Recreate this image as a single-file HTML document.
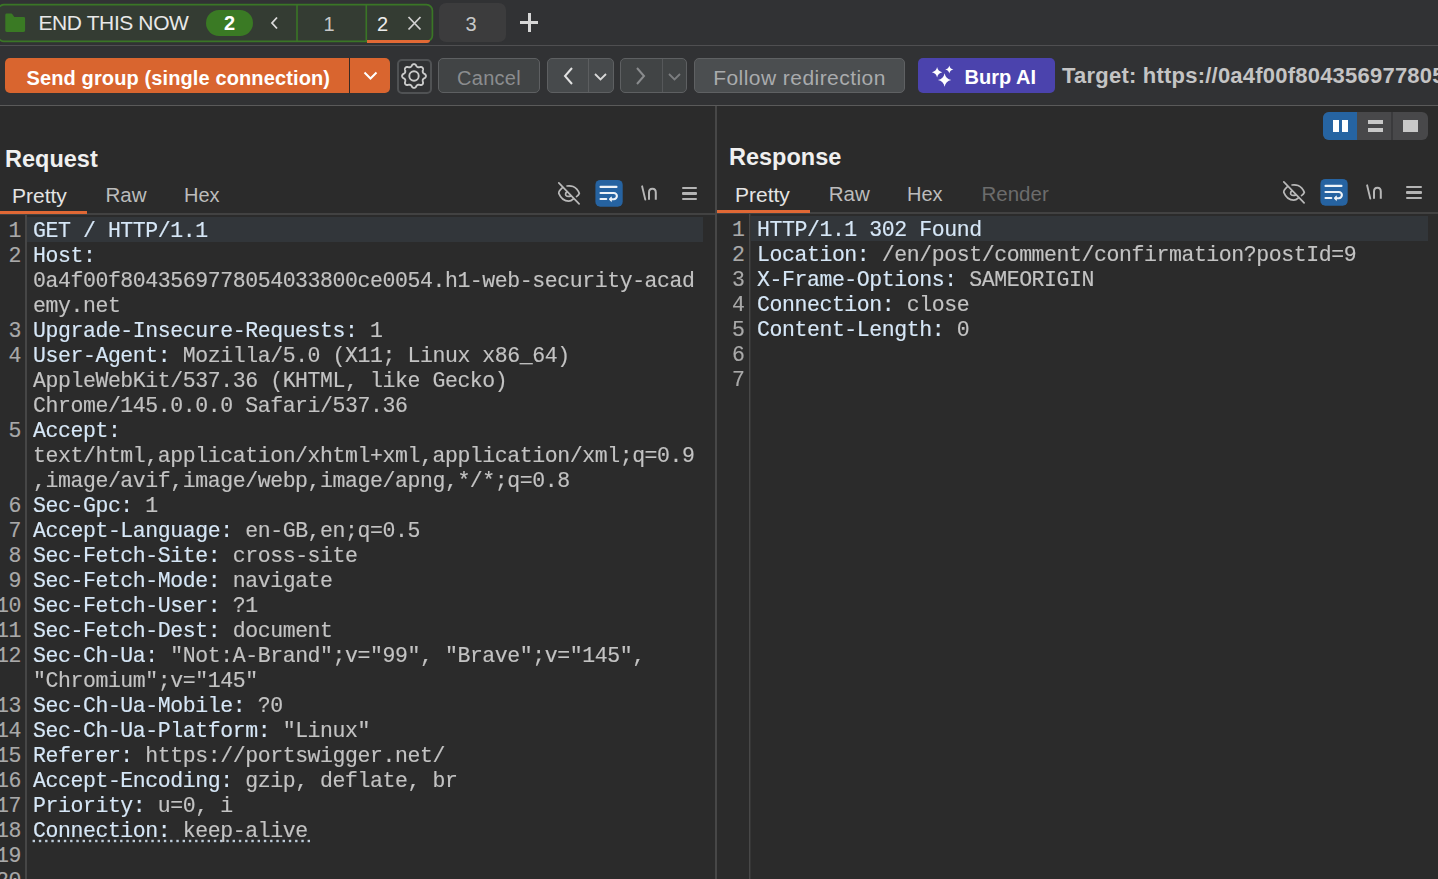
<!DOCTYPE html>
<html><head><meta charset="utf-8">
<style>
*{margin:0;padding:0;box-sizing:border-box}
html,body{width:1438px;height:879px;overflow:hidden;background:#2b2b2b;font-family:"Liberation Sans",sans-serif}
.a{position:absolute}
#top{left:0;top:0;width:1438px;height:106px;background:#313234}
#sep1{left:0;top:45px;width:1438px;height:1px;background:#4f4f51}
#sep2{left:0;top:105px;width:1438px;height:1px;background:#5a5a5a}
.txt{white-space:pre;line-height:1}
.mono{font-family:"Liberation Mono",monospace;font-size:21.5px;letter-spacing:-0.42px;white-space:pre;line-height:25px;-webkit-text-stroke:0.15px currentColor}
.code{will-change:transform}
.k{color:#d6e7f7}
.v{color:#c3c3c3}
.ln{color:#a9a9a9;text-align:right;width:40px}
</style></head><body>
<div id="top" class="a"></div>
<div id="sep1" class="a"></div>
<div id="sep2" class="a"></div>

<!-- tab group -->
<svg class="a" style="left:0;top:0" width="440" height="46"><rect x="-2" y="4.6" width="434.4" height="36.8" rx="6" fill="#343c33" stroke="#3a7626" stroke-width="1.7"/></svg>
<svg class="a" style="left:0;top:0" width="32" height="40"><path fill="#3a7a24" d="M5.3 14.9 Q5.3 13.5 6.7 13.5 H11.4 Q11.9 13.5 12.2 13.9 L14.3 17.1 H23.7 Q25.1 17.1 25.1 18.5 V30.5 Q25.1 31.9 23.7 31.9 H6.7 Q5.3 31.9 5.3 30.5 Z"/></svg>
<div class="a txt" style="left:38.5px;top:12px;font-size:21px;color:#e8e8e8;letter-spacing:-0.4px">END THIS NOW</div>
<div class="a" style="left:206px;top:10px;width:47px;height:26px;background:#3a7a24;border-radius:13px"></div>
<div class="a txt" style="left:206px;top:13px;width:47px;text-align:center;font-size:20px;font-weight:bold;color:#fff">2</div>
<svg class="a" style="left:268px;top:14px" width="14" height="18"><path d="M9 3.5 L4 9 L9 14.5" stroke="#dcdcdc" stroke-width="1.8" fill="none"/></svg>
<svg class="a" style="left:290px;top:0" width="90" height="46"><path d="M7 5 V41 M76.3 5 V41" stroke="#3a7626" stroke-width="1.6"/></svg>

<div class="a txt" style="left:295.5px;top:14px;width:67px;text-align:center;font-size:20px;color:#c8c8c8">1</div>
<div class="a txt" style="left:377px;top:14px;font-size:20px;color:#ececec">2</div>
<svg class="a" style="left:405px;top:14px" width="18" height="18"><path d="M3.5 3 L15.5 15.5 M15.5 3 L3.5 15.5" stroke="#d0d0d0" stroke-width="1.8" fill="none"/></svg>
<div class="a" style="left:367px;top:39.5px;width:63px;height:3px;background:#e26935;border-radius:0 0 3px 0"></div>
<div class="a" style="left:439px;top:3px;width:67px;height:39px;background:#3c3c3d;border-radius:7px"></div>
<div class="a txt" style="left:437.5px;top:13.5px;width:67px;text-align:center;font-size:20px;color:#c8c8c8">3</div>
<div class="a" style="left:520px;top:21px;width:18px;height:2.5px;background:#d6d6d6"></div>
<div class="a" style="left:528px;top:13px;width:2.5px;height:18.5px;background:#d6d6d6"></div>

<!-- toolbar -->
<div class="a btn" style="left:5px;top:58px;width:385px;height:35px;background:#d9652f;border-radius:5px"></div>
<div class="a" style="left:349px;top:58px;width:1px;height:35px;background:#3a2a22"></div>
<div class="a txt" style="left:26.5px;top:68px;font-size:20px;font-weight:bold;color:#fff;letter-spacing:0.12px">Send group (single connection)</div>
<svg class="a" style="left:362px;top:69px" width="18" height="14"><path d="M2.5 3.5 L8.5 9.5 L14.5 3.5" stroke="#fff" stroke-width="2" fill="none"/></svg>
<div class="a" style="left:397px;top:58.5px;width:34.5px;height:35px;border:2px solid #505254;border-radius:5px"></div>
<svg class="a" style="left:396px;top:56px" width="38" height="40" viewBox="0 0 38 40"><path fill="none" stroke="#cacaca" stroke-width="1.9" stroke-linejoin="round" d="M29.90 20.00 L29.89 20.23 L29.85 20.47 L29.78 20.69 L29.68 20.92 L29.57 21.14 L29.42 21.35 L29.25 21.56 L29.06 21.75 L28.84 21.94 L28.54 22.10 L28.25 22.25 L28.02 22.40 L27.81 22.56 L27.62 22.71 L27.45 22.87 L27.30 23.02 L27.17 23.18 L27.05 23.34 L26.95 23.50 L26.87 23.67 L26.81 23.85 L26.76 24.04 L26.73 24.23 L26.71 24.44 L26.71 24.66 L26.72 24.89 L26.75 25.13 L26.78 25.38 L26.83 25.66 L26.94 25.97 L27.03 26.30 L27.06 26.58 L27.06 26.86 L27.03 27.12 L26.98 27.37 L26.91 27.61 L26.82 27.84 L26.71 28.05 L26.57 28.24 L26.41 28.41 L26.24 28.57 L26.05 28.71 L25.84 28.82 L25.61 28.91 L25.37 28.98 L25.12 29.03 L24.86 29.06 L24.58 29.06 L24.30 29.03 L23.97 28.94 L23.66 28.83 L23.38 28.78 L23.13 28.75 L22.89 28.72 L22.66 28.71 L22.44 28.71 L22.23 28.73 L22.04 28.76 L21.85 28.81 L21.67 28.87 L21.50 28.95 L21.34 29.05 L21.18 29.17 L21.02 29.30 L20.87 29.45 L20.71 29.62 L20.56 29.81 L20.40 30.02 L20.25 30.25 L20.10 30.54 L19.94 30.84 L19.75 31.06 L19.56 31.25 L19.35 31.42 L19.14 31.57 L18.92 31.68 L18.69 31.78 L18.47 31.85 L18.23 31.89 L18.00 31.90 L17.77 31.89 L17.53 31.85 L17.31 31.78 L17.08 31.68 L16.86 31.57 L16.65 31.42 L16.44 31.25 L16.25 31.06 L16.06 30.84 L15.90 30.54 L15.75 30.25 L15.60 30.02 L15.44 29.81 L15.29 29.62 L15.13 29.45 L14.98 29.30 L14.82 29.17 L14.66 29.05 L14.50 28.95 L14.33 28.87 L14.15 28.81 L13.96 28.76 L13.77 28.73 L13.56 28.71 L13.34 28.71 L13.11 28.72 L12.87 28.75 L12.62 28.78 L12.34 28.83 L12.03 28.94 L11.70 29.03 L11.42 29.06 L11.14 29.06 L10.88 29.03 L10.63 28.98 L10.39 28.91 L10.16 28.82 L9.95 28.71 L9.76 28.57 L9.59 28.41 L9.43 28.24 L9.29 28.05 L9.18 27.84 L9.09 27.61 L9.02 27.37 L8.97 27.12 L8.94 26.86 L8.94 26.58 L8.97 26.30 L9.06 25.97 L9.17 25.66 L9.22 25.38 L9.25 25.13 L9.28 24.89 L9.29 24.66 L9.29 24.44 L9.27 24.23 L9.24 24.04 L9.19 23.85 L9.13 23.67 L9.05 23.50 L8.95 23.34 L8.83 23.18 L8.70 23.02 L8.55 22.87 L8.38 22.71 L8.19 22.56 L7.98 22.40 L7.75 22.25 L7.46 22.10 L7.16 21.94 L6.94 21.75 L6.75 21.56 L6.58 21.35 L6.43 21.14 L6.32 20.92 L6.22 20.69 L6.15 20.47 L6.11 20.23 L6.10 20.00 L6.11 19.77 L6.15 19.53 L6.22 19.31 L6.32 19.08 L6.43 18.86 L6.58 18.65 L6.75 18.44 L6.94 18.25 L7.16 18.06 L7.46 17.90 L7.75 17.75 L7.98 17.60 L8.19 17.44 L8.38 17.29 L8.55 17.13 L8.70 16.98 L8.83 16.82 L8.95 16.66 L9.05 16.50 L9.13 16.33 L9.19 16.15 L9.24 15.96 L9.27 15.77 L9.29 15.56 L9.29 15.34 L9.28 15.11 L9.25 14.87 L9.22 14.62 L9.17 14.34 L9.06 14.03 L8.97 13.70 L8.94 13.42 L8.94 13.14 L8.97 12.88 L9.02 12.63 L9.09 12.39 L9.18 12.16 L9.29 11.95 L9.43 11.76 L9.59 11.59 L9.76 11.43 L9.95 11.29 L10.16 11.18 L10.39 11.09 L10.63 11.02 L10.88 10.97 L11.14 10.94 L11.42 10.94 L11.70 10.97 L12.03 11.06 L12.34 11.17 L12.62 11.22 L12.87 11.25 L13.11 11.28 L13.34 11.29 L13.56 11.29 L13.77 11.27 L13.96 11.24 L14.15 11.19 L14.33 11.13 L14.50 11.05 L14.66 10.95 L14.82 10.83 L14.98 10.70 L15.13 10.55 L15.29 10.38 L15.44 10.19 L15.60 9.98 L15.75 9.75 L15.90 9.46 L16.06 9.16 L16.25 8.94 L16.44 8.75 L16.65 8.58 L16.86 8.43 L17.08 8.32 L17.31 8.22 L17.53 8.15 L17.77 8.11 L18.00 8.10 L18.23 8.11 L18.47 8.15 L18.69 8.22 L18.92 8.32 L19.14 8.43 L19.35 8.58 L19.56 8.75 L19.75 8.94 L19.94 9.16 L20.10 9.46 L20.25 9.75 L20.40 9.98 L20.56 10.19 L20.71 10.38 L20.87 10.55 L21.02 10.70 L21.18 10.83 L21.34 10.95 L21.50 11.05 L21.67 11.13 L21.85 11.19 L22.04 11.24 L22.23 11.27 L22.44 11.29 L22.66 11.29 L22.89 11.28 L23.13 11.25 L23.38 11.22 L23.66 11.17 L23.97 11.06 L24.30 10.97 L24.58 10.94 L24.86 10.94 L25.12 10.97 L25.37 11.02 L25.61 11.09 L25.84 11.18 L26.05 11.29 L26.24 11.43 L26.41 11.59 L26.57 11.76 L26.71 11.95 L26.82 12.16 L26.91 12.39 L26.98 12.63 L27.03 12.88 L27.06 13.14 L27.06 13.42 L27.03 13.70 L26.94 14.03 L26.83 14.34 L26.78 14.62 L26.75 14.87 L26.72 15.11 L26.71 15.34 L26.71 15.56 L26.73 15.77 L26.76 15.96 L26.81 16.15 L26.87 16.33 L26.95 16.50 L27.05 16.66 L27.17 16.82 L27.30 16.98 L27.45 17.13 L27.62 17.29 L27.81 17.44 L28.02 17.60 L28.25 17.75 L28.54 17.90 L28.84 18.06 L29.06 18.25 L29.25 18.44 L29.42 18.65 L29.57 18.86 L29.68 19.08 L29.78 19.31 L29.85 19.53 L29.89 19.77Z"/><circle cx="18" cy="20" r="4.7" fill="none" stroke="#cacaca" stroke-width="1.9"/></svg>
<div class="a" style="left:438px;top:58px;width:102px;height:35px;background:#414445;border:1.5px solid #5e6062;border-radius:5px"></div>
<div class="a txt" style="left:438px;top:68px;width:102px;text-align:center;font-size:20px;color:#8b8d8f;letter-spacing:0.3px">Cancel</div>
<div class="a" style="left:547px;top:58px;width:67px;height:35px;background:#474a4c;border:1.5px solid #5e6062;border-radius:5px"></div>
<div class="a" style="left:588px;top:59px;width:1px;height:33px;background:#5c5e60"></div>
<svg class="a" style="left:560px;top:66px" width="16" height="20"><path d="M12 2 L5 10 L12 18" stroke="#e2e2e2" stroke-width="2" fill="none"/></svg>
<svg class="a" style="left:593px;top:71px" width="16" height="12"><path d="M2 3 L7.5 8.5 L13 3" stroke="#d8d8d8" stroke-width="1.8" fill="none"/></svg>
<div class="a" style="left:620px;top:58px;width:67px;height:35px;background:#414445;border:1.5px solid #5e6062;border-radius:5px"></div>
<div class="a" style="left:662px;top:59px;width:1px;height:33px;background:#56585a"></div>
<svg class="a" style="left:633px;top:66px" width="16" height="20"><path d="M4 2 L11 10 L4 18" stroke="#8a8c8e" stroke-width="2" fill="none"/></svg>
<svg class="a" style="left:667px;top:71px" width="16" height="12"><path d="M2 3 L7.5 8.5 L13 3" stroke="#7c7e80" stroke-width="1.8" fill="none"/></svg>
<div class="a" style="left:694px;top:58px;width:211px;height:35px;background:#4b4e50;border:1.5px solid #5f6163;border-radius:5px"></div>
<div class="a txt" style="left:694px;top:67px;width:211px;text-align:center;font-size:21px;color:#a9abad;letter-spacing:0.45px">Follow redirection</div>
<div class="a" style="left:918px;top:58px;width:137px;height:35px;background:#4b43ad;border-radius:5px"></div>
<svg class="a" style="left:928px;top:62px" width="30" height="28" viewBox="0 0 30 28"><path fill="#fff" d="M16.60 11.30 Q17.67 16.93 23.30 18.00 Q17.67 19.07 16.60 24.70 Q15.53 19.07 9.90 18.00 Q15.53 16.93 16.60 11.30ZM9.10 5.10 Q9.93 9.47 14.30 10.30 Q9.93 11.13 9.10 15.50 Q8.27 11.13 3.90 10.30 Q8.27 9.47 9.10 5.10ZM21.30 3.40 Q21.96 6.84 25.40 7.50 Q21.96 8.16 21.30 11.60 Q20.64 8.16 17.20 7.50 Q20.64 6.84 21.30 3.40Z"/></svg>
<div class="a txt" style="left:964.5px;top:67px;font-size:20px;font-weight:bold;color:#fff">Burp AI</div>
<div class="a txt" style="left:1062px;top:65px;font-size:22px;font-weight:bold;color:#c4c4c4;letter-spacing:0.22px">Target: https://0a4f00f804356977805</div>

<!-- layout buttons -->
<div class="a" style="left:1323px;top:112px;width:105px;height:28px;background:#48484a;border-radius:6px"></div>
<div class="a" style="left:1323px;top:112px;width:34px;height:28px;background:#2664a2;border-radius:6px 0 0 6px"></div>
<div class="a" style="left:1391px;top:112px;width:2px;height:28px;background:#3a3a3c"></div>
<div class="a" style="left:1333px;top:120px;width:6px;height:12px;background:#fff"></div>
<div class="a" style="left:1342px;top:120px;width:6px;height:12px;background:#fff"></div>
<div class="a" style="left:1368px;top:120px;width:15px;height:4px;background:#c8c8c8"></div>
<div class="a" style="left:1368px;top:128px;width:15px;height:4px;background:#c8c8c8"></div>
<div class="a" style="left:1403px;top:120px;width:15px;height:12px;background:#c8c8c8"></div>


<!-- left panel chrome -->
<div class="a txt" style="left:5px;top:147.5px;font-size:23.5px;font-weight:bold;color:#f0f0f0">Request</div>
<div class="a txt" style="left:12px;top:185px;font-size:21px;color:#e4e4e4">Pretty</div>
<div class="a txt" style="left:105.5px;top:185px;font-size:20.5px;color:#bcbcbc">Raw</div>
<div class="a txt" style="left:184px;top:185px;font-size:20px;color:#bcbcbc">Hex</div>
<div class="a" style="left:0;top:213px;width:716px;height:2px;background:#424242"></div>
<div class="a" style="left:0;top:211px;width:87px;height:3px;background:#e06835"></div>
<div class="a" style="left:25px;top:215px;width:2px;height:664px;background:#464646"></div>
<div class="a" style="left:27px;top:217px;width:676px;height:25px;background:#32363a"></div>
<!-- eye, wrap, \n, menu left -->
<svg class="a" style="left:554px;top:178px" width="30" height="30" viewBox="0 0 30 30"><path fill="none" stroke="#b9b9b9" stroke-width="1.7" stroke-linecap="round" d="M4.8 4.8 L25.1 25.9 M8.2 9.9 C5.8 12 4.6 14 4.8 15.4 C6.5 19.5 10 23.2 14.7 23.2 C16.5 23.2 18 22.3 19.1 21.2 M12.6 14.3 C11.5 15 11.3 16.5 12 17.5 C12.8 18.4 14.5 18.6 16.7 18.1 M13 8 C14.5 7.8 17 7.8 19.1 8.5 C21.5 9.5 24 12 25.3 15.4 C24.8 16.8 23.8 17.8 22.5 18.6"/></svg>
<svg class="a" style="left:594px;top:178px" width="30" height="30" viewBox="0 0 30 30"><rect x="1.4" y="1.9" width="27.3" height="26.9" rx="5" fill="#2663a1"/><path fill="none" stroke="#eef3f8" stroke-width="2.1" stroke-linecap="round" d="M6.5 8.9 H22.5 M6.5 15 H19.8 A3.1 3.1 0 0 1 19.8 21.2 H17.2 M6.5 21 H12.3"/><path d="M15 21.2 L17.4 18.9 L17.4 23.5 Z" fill="#eef3f8" stroke="#eef3f8" stroke-width="0.8" stroke-linejoin="round"/></svg>
<svg class="a" style="left:636px;top:180px" width="26" height="26" viewBox="0 0 26 26"><path fill="none" stroke="#b6b6b6" stroke-width="1.9" stroke-linecap="round" d="M6.1 6.3 L9.3 19.6"/><path fill="none" stroke="#b6b6b6" stroke-width="2" d="M13 19.8 V12.5 C13 10 14.5 8.7 16.4 8.7 C18.3 8.7 19.8 10 19.8 12.5 V19.8"/></svg>
<div class="a" style="left:681.5px;top:186.8px;width:15.5px;height:2.3px;background:#b4b4b4;border-radius:1px"></div>
<div class="a" style="left:681.5px;top:192.4px;width:15.5px;height:2.3px;background:#b4b4b4;border-radius:1px"></div>
<div class="a" style="left:681.5px;top:197.9px;width:15.5px;height:2.3px;background:#b4b4b4;border-radius:1px"></div>
<div class="a" style="left:715px;top:106px;width:2px;height:773px;background:#474747"></div>
<svg class="a" style="left:30.3px;top:839px" width="290" height="4" fill="#bccbd9"><rect x="2.60" y="0.8" width="2.4" height="2.4"/><rect x="8.85" y="0.8" width="2.4" height="2.4"/><rect x="15.10" y="0.8" width="2.4" height="2.4"/><rect x="21.35" y="0.8" width="2.4" height="2.4"/><rect x="27.60" y="0.8" width="2.4" height="2.4"/><rect x="33.85" y="0.8" width="2.4" height="2.4"/><rect x="40.10" y="0.8" width="2.4" height="2.4"/><rect x="46.35" y="0.8" width="2.4" height="2.4"/><rect x="52.60" y="0.8" width="2.4" height="2.4"/><rect x="58.85" y="0.8" width="2.4" height="2.4"/><rect x="65.10" y="0.8" width="2.4" height="2.4"/><rect x="71.35" y="0.8" width="2.4" height="2.4"/><rect x="77.60" y="0.8" width="2.4" height="2.4"/><rect x="83.85" y="0.8" width="2.4" height="2.4"/><rect x="90.10" y="0.8" width="2.4" height="2.4"/><rect x="96.35" y="0.8" width="2.4" height="2.4"/><rect x="102.60" y="0.8" width="2.4" height="2.4"/><rect x="108.85" y="0.8" width="2.4" height="2.4"/><rect x="115.10" y="0.8" width="2.4" height="2.4"/><rect x="121.35" y="0.8" width="2.4" height="2.4"/><rect x="127.60" y="0.8" width="2.4" height="2.4"/><rect x="133.85" y="0.8" width="2.4" height="2.4"/><rect x="140.10" y="0.8" width="2.4" height="2.4"/><rect x="146.35" y="0.8" width="2.4" height="2.4"/><rect x="152.60" y="0.8" width="2.4" height="2.4"/><rect x="158.85" y="0.8" width="2.4" height="2.4"/><rect x="165.10" y="0.8" width="2.4" height="2.4"/><rect x="171.35" y="0.8" width="2.4" height="2.4"/><rect x="177.60" y="0.8" width="2.4" height="2.4"/><rect x="183.85" y="0.8" width="2.4" height="2.4"/><rect x="190.10" y="0.8" width="2.4" height="2.4"/><rect x="196.35" y="0.8" width="2.4" height="2.4"/><rect x="202.60" y="0.8" width="2.4" height="2.4"/><rect x="208.85" y="0.8" width="2.4" height="2.4"/><rect x="215.10" y="0.8" width="2.4" height="2.4"/><rect x="221.35" y="0.8" width="2.4" height="2.4"/><rect x="227.60" y="0.8" width="2.4" height="2.4"/><rect x="233.85" y="0.8" width="2.4" height="2.4"/><rect x="240.10" y="0.8" width="2.4" height="2.4"/><rect x="246.35" y="0.8" width="2.4" height="2.4"/><rect x="252.60" y="0.8" width="2.4" height="2.4"/><rect x="258.85" y="0.8" width="2.4" height="2.4"/><rect x="265.10" y="0.8" width="2.4" height="2.4"/><rect x="271.35" y="0.8" width="2.4" height="2.4"/><rect x="277.60" y="0.8" width="2.4" height="2.4"/></svg>
<!--LEFTROWS-->
<div class="a mono ln" style="left:-39px;top:219.0px;width:60px">1</div>
<div class="a mono code" style="left:33px;top:219.0px"><span class="k">GET / HTTP/1.1</span></div>
<div class="a mono ln" style="left:-39px;top:244.0px;width:60px">2</div>
<div class="a mono code" style="left:33px;top:244.0px"><span class="k">Host:</span></div>
<div class="a mono code" style="left:33px;top:269.0px"><span class="v">0a4f00f8043569778054033800ce0054.h1-web-security-acad</span></div>
<div class="a mono code" style="left:33px;top:294.0px"><span class="v">emy.net</span></div>
<div class="a mono ln" style="left:-39px;top:319.0px;width:60px">3</div>
<div class="a mono code" style="left:33px;top:319.0px"><span class="k">Upgrade-Insecure-Requests:</span><span class="v"> 1</span></div>
<div class="a mono ln" style="left:-39px;top:344.0px;width:60px">4</div>
<div class="a mono code" style="left:33px;top:344.0px"><span class="k">User-Agent:</span><span class="v"> Mozilla/5.0 (X11; Linux x86_64)</span></div>
<div class="a mono code" style="left:33px;top:369.0px"><span class="v">AppleWebKit/537.36 (KHTML, like Gecko)</span></div>
<div class="a mono code" style="left:33px;top:394.0px"><span class="v">Chrome/145.0.0.0 Safari/537.36</span></div>
<div class="a mono ln" style="left:-39px;top:419.0px;width:60px">5</div>
<div class="a mono code" style="left:33px;top:419.0px"><span class="k">Accept:</span></div>
<div class="a mono code" style="left:33px;top:444.0px"><span class="v">text/html,application/xhtml+xml,application/xml;q=0.9</span></div>
<div class="a mono code" style="left:33px;top:469.0px"><span class="v">,image/avif,image/webp,image/apng,*/*;q=0.8</span></div>
<div class="a mono ln" style="left:-39px;top:494.0px;width:60px">6</div>
<div class="a mono code" style="left:33px;top:494.0px"><span class="k">Sec-Gpc:</span><span class="v"> 1</span></div>
<div class="a mono ln" style="left:-39px;top:519.0px;width:60px">7</div>
<div class="a mono code" style="left:33px;top:519.0px"><span class="k">Accept-Language:</span><span class="v"> en-GB,en;q=0.5</span></div>
<div class="a mono ln" style="left:-39px;top:544.0px;width:60px">8</div>
<div class="a mono code" style="left:33px;top:544.0px"><span class="k">Sec-Fetch-Site:</span><span class="v"> cross-site</span></div>
<div class="a mono ln" style="left:-39px;top:569.0px;width:60px">9</div>
<div class="a mono code" style="left:33px;top:569.0px"><span class="k">Sec-Fetch-Mode:</span><span class="v"> navigate</span></div>
<div class="a mono ln" style="left:-39px;top:594.0px;width:60px">10</div>
<div class="a mono code" style="left:33px;top:594.0px"><span class="k">Sec-Fetch-User:</span><span class="v"> ?1</span></div>
<div class="a mono ln" style="left:-39px;top:619.0px;width:60px">11</div>
<div class="a mono code" style="left:33px;top:619.0px"><span class="k">Sec-Fetch-Dest:</span><span class="v"> document</span></div>
<div class="a mono ln" style="left:-39px;top:644.0px;width:60px">12</div>
<div class="a mono code" style="left:33px;top:644.0px"><span class="k">Sec-Ch-Ua:</span><span class="v"> &quot;Not:A-Brand&quot;;v=&quot;99&quot;, &quot;Brave&quot;;v=&quot;145&quot;,</span></div>
<div class="a mono code" style="left:33px;top:669.0px"><span class="v">&quot;Chromium&quot;;v=&quot;145&quot;</span></div>
<div class="a mono ln" style="left:-39px;top:694.0px;width:60px">13</div>
<div class="a mono code" style="left:33px;top:694.0px"><span class="k">Sec-Ch-Ua-Mobile:</span><span class="v"> ?0</span></div>
<div class="a mono ln" style="left:-39px;top:719.0px;width:60px">14</div>
<div class="a mono code" style="left:33px;top:719.0px"><span class="k">Sec-Ch-Ua-Platform:</span><span class="v"> &quot;Linux&quot;</span></div>
<div class="a mono ln" style="left:-39px;top:744.0px;width:60px">15</div>
<div class="a mono code" style="left:33px;top:744.0px"><span class="k">Referer:</span><span class="v"> https://portswigger.net/</span></div>
<div class="a mono ln" style="left:-39px;top:769.0px;width:60px">16</div>
<div class="a mono code" style="left:33px;top:769.0px"><span class="k">Accept-Encoding:</span><span class="v"> gzip, deflate, br</span></div>
<div class="a mono ln" style="left:-39px;top:794.0px;width:60px">17</div>
<div class="a mono code" style="left:33px;top:794.0px"><span class="k">Priority:</span><span class="v"> u=0, i</span></div>
<div class="a mono ln" style="left:-39px;top:819.0px;width:60px">18</div>
<div class="a mono code" style="left:33px;top:819.0px"><span class="k">Connection:</span><span class="v"> keep-alive</span></div>
<div class="a mono ln" style="left:-39px;top:844.0px;width:60px">19</div>
<div class="a mono ln" style="left:-39px;top:869.0px;width:60px">20</div>
<!--/LEFTROWS-->

<!-- right panel chrome -->
<div class="a txt" style="left:729px;top:146px;font-size:23.5px;font-weight:bold;color:#f0f0f0">Response</div>
<div class="a txt" style="left:735px;top:184px;font-size:21px;color:#e4e4e4">Pretty</div>
<div class="a txt" style="left:828.7px;top:184px;font-size:20.5px;color:#bcbcbc">Raw</div>
<div class="a txt" style="left:907px;top:184px;font-size:20px;color:#bcbcbc">Hex</div>
<div class="a txt" style="left:981.5px;top:184px;font-size:20.5px;color:#6c6c6c">Render</div>
<div class="a" style="left:717px;top:212px;width:721px;height:2px;background:#424242"></div>
<div class="a" style="left:717px;top:210px;width:93px;height:3px;background:#e06835"></div>
<div class="a" style="left:749px;top:214px;width:2px;height:665px;background:linear-gradient(90deg,#484848 50%,#363636 50%)"></div>
<div class="a" style="left:751px;top:216px;width:677px;height:25px;background:#32363a"></div>
<svg class="a" style="left:1279px;top:177px" width="30" height="30" viewBox="0 0 30 30"><path fill="none" stroke="#b9b9b9" stroke-width="1.7" stroke-linecap="round" d="M4.8 4.8 L25.1 25.9 M8.2 9.9 C5.8 12 4.6 14 4.8 15.4 C6.5 19.5 10 23.2 14.7 23.2 C16.5 23.2 18 22.3 19.1 21.2 M12.6 14.3 C11.5 15 11.3 16.5 12 17.5 C12.8 18.4 14.5 18.6 16.7 18.1 M13 8 C14.5 7.8 17 7.8 19.1 8.5 C21.5 9.5 24 12 25.3 15.4 C24.8 16.8 23.8 17.8 22.5 18.6"/></svg>
<svg class="a" style="left:1319px;top:177px" width="30" height="30" viewBox="0 0 30 30"><rect x="1.4" y="1.9" width="27.3" height="26.9" rx="5" fill="#2663a1"/><path fill="none" stroke="#eef3f8" stroke-width="2.1" stroke-linecap="round" d="M6.5 8.9 H22.5 M6.5 15 H19.8 A3.1 3.1 0 0 1 19.8 21.2 H17.2 M6.5 21 H12.3"/><path d="M15 21.2 L17.4 18.9 L17.4 23.5 Z" fill="#eef3f8" stroke="#eef3f8" stroke-width="0.8" stroke-linejoin="round"/></svg>
<svg class="a" style="left:1361px;top:179px" width="26" height="26" viewBox="0 0 26 26"><path fill="none" stroke="#b6b6b6" stroke-width="1.9" stroke-linecap="round" d="M6.1 6.3 L9.3 19.6"/><path fill="none" stroke="#b6b6b6" stroke-width="2" d="M13 19.8 V12.5 C13 10 14.5 8.7 16.4 8.7 C18.3 8.7 19.8 10 19.8 12.5 V19.8"/></svg>
<div class="a" style="left:1406px;top:185.8px;width:15.5px;height:2.3px;background:#b4b4b4;border-radius:1px"></div>
<div class="a" style="left:1406px;top:191.4px;width:15.5px;height:2.3px;background:#b4b4b4;border-radius:1px"></div>
<div class="a" style="left:1406px;top:196.9px;width:15.5px;height:2.3px;background:#b4b4b4;border-radius:1px"></div>
<!--RIGHTROWS-->
<div class="a mono ln" style="left:684.5px;top:218.0px;width:60px">1</div>
<div class="a mono code" style="left:756.5px;top:218.0px"><span class="k">HTTP/1.1 302 Found</span></div>
<div class="a mono ln" style="left:684.5px;top:243.0px;width:60px">2</div>
<div class="a mono code" style="left:756.5px;top:243.0px"><span class="k">Location:</span><span class="v"> /en/post/comment/confirmation?postId=9</span></div>
<div class="a mono ln" style="left:684.5px;top:268.0px;width:60px">3</div>
<div class="a mono code" style="left:756.5px;top:268.0px"><span class="k">X-Frame-Options:</span><span class="v"> SAMEORIGIN</span></div>
<div class="a mono ln" style="left:684.5px;top:293.0px;width:60px">4</div>
<div class="a mono code" style="left:756.5px;top:293.0px"><span class="k">Connection:</span><span class="v"> close</span></div>
<div class="a mono ln" style="left:684.5px;top:318.0px;width:60px">5</div>
<div class="a mono code" style="left:756.5px;top:318.0px"><span class="k">Content-Length:</span><span class="v"> 0</span></div>
<div class="a mono ln" style="left:684.5px;top:343.0px;width:60px">6</div>
<div class="a mono ln" style="left:684.5px;top:368.0px;width:60px">7</div>
<!--/RIGHTROWS-->
</body></html>
